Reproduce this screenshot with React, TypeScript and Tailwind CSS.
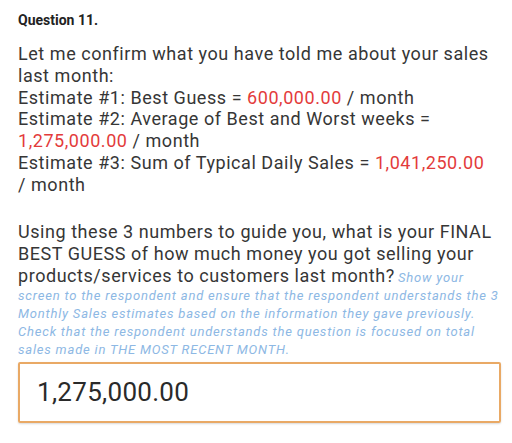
const estimates = [
  { label: 'Estimate #1: Best Guess = ', value: '600,000.00', wrap: false },
  { label: 'Estimate #2: Average of Best and Worst weeks = ', value: '1,275,000.00', wrap: false },
  { label: 'Estimate #3: Sum of Typical Daily Sales = ', value: '1,041,250.00', wrap: true },
]

export default function App() {
  return (
    <div className="h-[443px] w-[512px] overflow-hidden bg-white pl-[18px] pr-[8px] pt-[10px] font-['Roboto',sans-serif] text-[#363636]">
      <p className="text-[14px] font-bold leading-[20px] text-[#222]">Question 11.</p>

      <div className="mt-[13px] text-[18px] leading-[21.8px] tracking-[0.55px]">
        <p>
          Let me confirm what you have told me about your sales
          <br />
          last month:
        </p>
        {estimates.map((e) => (
          <p key={e.value}>
            {e.label}
            <span className="text-[#e33b3b]">{e.value}</span>
            {e.wrap && <br />}
            {e.wrap ? '/ month' : ' / month'}
          </p>
        ))}
      </div>

      <p className="mt-[25px] text-[13px] leading-[18px]">
        <span className="text-[18px] leading-[22px] tracking-[0.55px]">
          Using these 3 numbers to guide you, what is your FINAL
          <br />
          BEST GUESS of how much money you got selling your
          <br />
          products/services to customers last month?
        </span>{' '}
        <span className="italic tracking-[0.8px] text-[#8db8e4]">
          Show your
          <br />
          screen to the respondent and ensure that the respondent understands the 3
          <br />
          Monthly Sales estimates based on the information they gave previously.
          <br />
          Check that the respondent understands the question is focused on total
          <br />
          sales made in THE MOST RECENT MONTH.
        </span>
      </p>

      <div className="mt-[3px] flex h-[61px] w-[483px] items-center rounded-[2px] border-2 border-[#e9a965] px-[17px] shadow-[0_1px_2px_rgba(0,0,0,0.15)]">
        <span className="text-[26px] tracking-[0.3px] text-[#2a2a2a]">1,275,000.00</span>
      </div>
    </div>
  )
}
